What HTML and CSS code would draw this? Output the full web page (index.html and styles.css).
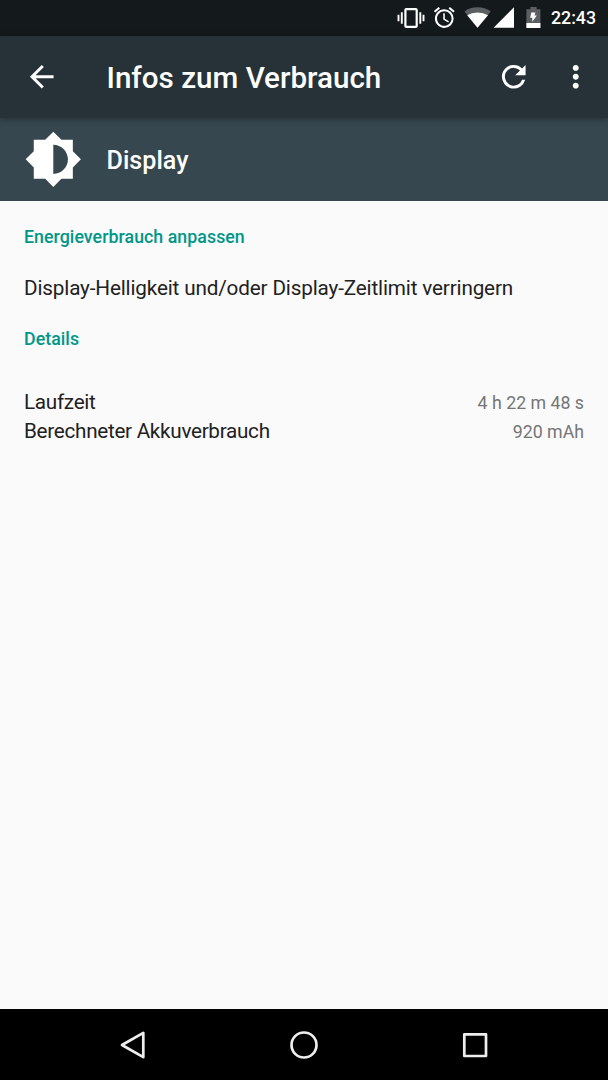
FILE: index.html
```html
<!DOCTYPE html>
<html lang="de">
<head>
    <meta charset="UTF-8">
    <title>Infos zum Verbrauch</title>
    <link rel="stylesheet" href="styles.css">
</head>
<body>
<div class="screen">
    <!-- Statusleiste -->
    <div class="statusbar">
        <svg class="status-icons" width="146" height="36" viewBox="396 0 146 36">
            <!-- Vibration -->
            <rect x="405.4" y="9.1" width="11.3" height="17.8" rx="1" fill="none" stroke="#fff" stroke-width="2.2"/>
            <path d="M401.8 12.3v11.4M398.5 14.7v6.6M420.3 12.3v11.4M423.5 14.7v6.6" stroke="#fff" stroke-width="1.9"/>
            <!-- Wecker -->
            <path transform="translate(431.8 5) scale(1.04)" fill="#fff" d="M22 5.72l-4.6-3.86-1.29 1.53 4.6 3.86L22 5.72zM7.88 3.39L6.6 1.86 2 5.71l1.29 1.53 4.59-3.85zM12.5 8H11v6l4.75 2.85.75-1.23-4-2.37V8zM12 4c-4.97 0-9 4.03-9 9s4.02 9 9 9a9 9 0 0 0 0-18zm0 16c-3.87 0-7-3.13-7-7s3.13-7 7-7 7 3.13 7 7-3.13 7-7 7z"/>
            <!-- WLAN -->
            <path d="M477.5 27.8L464.5 11.4Q470 7.2 477.5 7.2T490.8 11.4z" fill="#5b5f61"/>
            <path d="M477.5 27.8L467.2 15.2Q471.5 12.6 477.5 12.6T488 15.2z" fill="#fff"/>
            <!-- Mobilfunk -->
            <path d="M493.6 27.8L514 7.3V27.8z" fill="#fff"/>
            <!-- Akku -->
            <path d="M526.4 9.2H530.4V7H536.6V9.2H540.4V28H526.4z" fill="#5b5f61"/>
            <path d="M526.4 23H540.4V28H526.4z" fill="#fff"/>
            <path d="M531.3 12.4H535.4L534.5 15.6H536.8L532.3 21.8V17.8H530.2z" fill="#fff"/>
        </svg>
        <span class="time">22:43</span>
    </div>

    <div class="appbar">
        <svg class="back" width="35.5" height="35.5" viewBox="0 0 24 24">
            <path d="M20 11H7.83l5.59-5.59L12 4l-8 8 8 8 1.41-1.41L7.83 13H20v-2z"/>
        </svg>
        <h1>Infos zum Verbrauch</h1>
        <svg class="refresh" width="35.5" height="35.5" viewBox="0 0 24 24">
            <path d="M17.65 6.35A7.96 7.96 0 0 0 12 4a8 8 0 1 0 7.73 10h-2.08A6 6 0 1 1 12 6c1.66 0 3.14.69 4.22 1.78L13 11h7V4l-2.35 2.35z"/>
        </svg>
        <svg class="more" width="35.5" height="35.5" viewBox="0 0 24 24">
            <path d="M12 8c1.1 0 2-.9 2-2s-.9-2-2-2-2 .9-2 2 .9 2 2 2zm0 2c-1.1 0-2 .9-2 2s.9 2 2 2 2-.9 2-2-.9-2-2-2zm0 6c-1.1 0-2 .9-2 2s.9 2 2 2 2-.9 2-2-.9-2-2-2z"/>
        </svg>
    </div>

    <div class="subject">
        <svg width="58.6" height="58.6" viewBox="0 0 24 24">
            <path d="M20 15.31L23.31 12 20 8.69V4h-4.69L12 .69 8.69 4H4v4.69L.69 12 4 15.31V20h4.69L12 23.31 15.31 20H20v-4.69zM12 18V6c3.31 0 6 2.69 6 6s-2.69 6-6 6z"/>
        </svg>
        <h2>Display</h2>
    </div>

    <div class="content">
        <h3>Energieverbrauch anpassen</h3>
        <p class="tip">Display-Helligkeit und/oder Display-Zeitlimit verringern</p>
        <h3>Details</h3>
        <div class="details">
            <div class="row"><span class="label">Laufzeit</span><span class="value">4 h 22 m 48 s</span></div>
            <div class="row"><span class="label">Berechneter Akkuverbrauch</span><span class="value">920 mAh</span></div>
        </div>
    </div>

    <!-- Navigationsleiste -->
    <div class="navbar">
        <svg width="30" height="30" viewBox="0 0 30 30">
            <path d="M4 15L25.3 2.8V27.2z"/>
        </svg>
        <svg width="30" height="30" viewBox="0 0 30 30">
            <circle cx="15" cy="15" r="12.5"/>
        </svg>
        <svg width="30" height="30" viewBox="0 0 30 30">
            <rect x="4.3" y="4.3" width="21.7" height="21.7"/>
        </svg>
    </div>
</div>
</body>
</html>
```
FILE: styles.css
```css
body {
    margin: 0;
    font-family: Roboto, "Noto Sans", sans-serif;
    background-color: #FAFAFA;
}
h1, h2, h3, p {
    margin: 0;
    font-weight: 500;
}
svg {
    display: block;
    flex: none;
}
.screen {
    display: flex;
    flex-direction: column;
    width: 608px;
    height: 1080px;
    overflow: hidden;
}
.statusbar {
    display: flex;
    align-items: center;
    justify-content: flex-end;
    height: 36px;
    padding-right: 12px;
    background-color: #14191C;
}
.time {
    width: 45px;
    margin-left: 9px;
    color: #FFF;
    font-size: 17.75px;
    font-weight: 500;
    line-height: 36px;
    white-space: nowrap;
}
.appbar {
    display: flex;
    align-items: center;
    height: 82px;
    padding: 0 15px 0 23.5px;
    background-color: #263238;
    box-shadow: 0 1px 6px rgba(0, 0, 0, .35);
    z-index: 1;
}
.appbar svg, .subject svg {
    fill: #FFF;
}
.appbar h1 {
    flex: 1;
    padding-top: 2px;
    margin-left: 47.5px;
    color: #FFF;
    font-size: 29.6px;
    line-height: 36px;
    white-space: nowrap;
}
.appbar .more {
    margin-left: 26.5px;
}
.subject {
    display: flex;
    align-items: center;
    height: 83px;
    padding-left: 24px;
    background-color: #37474F;
}
.subject h2 {
    padding-top: 2px;
    margin-left: 24px;
    color: #FFF;
    font-size: 25.1px;
    line-height: 32px;
}
.content {
    flex: 1;
    padding: 0 24px;
    color: #212121;
    font-size: 20.7px;
}
.content h3 {
    padding-top: 24px;
    color: #009688;
    font-size: 17.75px;
    letter-spacing: .05px;
    line-height: 24px;
}
.tip {
    padding-top: 27px;
    font-weight: 400;
    letter-spacing: -.155px;
    line-height: 25px;
    white-space: nowrap;
}
.content .tip + h3 {
    padding-top: 26px;
}
.details {
    padding-top: 37px;
}
.row {
    display: flex;
    justify-content: space-between;
    align-items: baseline;
    height: 29px;
    line-height: 29px;
}
.label {
    letter-spacing: -.29px;
}
.value {
    color: #757575;
    font-size: 17.75px;
}
.navbar {
    display: flex;
    align-items: center;
    justify-content: center;
    gap: 141px;
    height: 71px;
    background-color: #000;
}
.navbar svg {
    fill: none;
    stroke: #EEE;
    stroke-width: 2.7;
    stroke-linejoin: round;
}
```
